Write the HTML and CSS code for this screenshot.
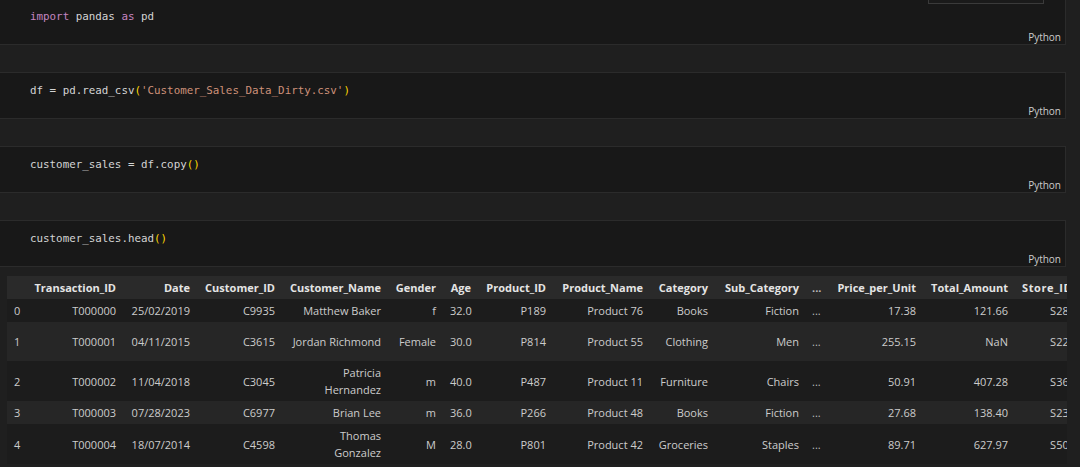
FILE: index.html
```html
<!DOCTYPE html>
<html>
<head>
<meta charset="utf-8">
<link rel="stylesheet" href="styles.css">
</head>
<body>
<div class="cell-toolbar"></div>
<div class="notebook">
  <div class="cell">
    <div class="editor">
      <div class="code"><span class="kw">import</span> pandas <span class="kw">as</span> pd</div>
      <div class="lang">Python</div>
    </div>
  </div>
  <div class="cell">
    <div class="editor">
      <div class="code">df = pd.read_csv<span class="br">(</span><span class="str">'Customer_Sales_Data_Dirty.csv'</span><span class="br">)</span></div>
      <div class="lang">Python</div>
    </div>
  </div>
  <div class="cell">
    <div class="editor">
      <div class="code">customer_sales = df.copy<span class="br">()</span></div>
      <div class="lang">Python</div>
    </div>
  </div>
  <div class="cell">
    <div class="editor">
      <div class="code">customer_sales.head<span class="br">()</span></div>
      <div class="lang">Python</div>
    </div>
  </div>
  <div class="output">
    <table class="df">
      <colgroup>
        <col class="w20"><col class="w96"><col class="w74"><col class="w85"><col class="w106"><col class="w55"><col class="w35"><col class="w75"><col class="w97"><col class="w65"><col class="w91"><col class="w23"><col class="w94"><col class="w92"><col class="w67">
      </colgroup>
      <thead>
        <tr class="h23">
          <th class="idx"></th><th>Transaction_ID</th><th>Date</th><th>Customer_ID</th><th>Customer_Name</th><th>Gender</th><th>Age</th><th>Product_ID</th><th>Product_Name</th><th>Category</th><th>Sub_Category</th><th class="dots">...</th><th>Price_per_Unit</th><th>Total_Amount</th><th class="left">Store_ID</th>
        </tr>
      </thead>
      <tbody>
        <tr class="h23">
          <td class="idx">0</td><td>T000000</td><td>25/02/2019</td><td>C9935</td><td>Matthew Baker</td><td>f</td><td>32.0</td><td>P189</td><td>Product 76</td><td>Books</td><td>Fiction</td><td class="dots">...</td><td>17.38</td><td>121.66</td><td>S281</td>
        </tr>
        <tr class="alt h39">
          <td class="idx">1</td><td>T000001</td><td>04/11/2015</td><td>C3615</td><td>Jordan Richmond</td><td>Female</td><td>30.0</td><td>P814</td><td>Product 55</td><td>Clothing</td><td>Men</td><td class="dots">...</td><td>255.15</td><td>NaN</td><td>S223</td>
        </tr>
        <tr class="h40">
          <td class="idx">2</td><td>T000002</td><td>11/04/2018</td><td>C3045</td><td>Patricia<br>Hernandez</td><td>m</td><td>40.0</td><td>P487</td><td>Product 11</td><td>Furniture</td><td>Chairs</td><td class="dots">...</td><td>50.91</td><td>407.28</td><td>S364</td>
        </tr>
        <tr class="alt h23">
          <td class="idx">3</td><td>T000003</td><td>07/28/2023</td><td>C6977</td><td>Brian Lee</td><td>m</td><td>36.0</td><td>P266</td><td>Product 48</td><td>Books</td><td>Fiction</td><td class="dots">...</td><td>27.68</td><td>138.40</td><td>S233</td>
        </tr>
        <tr class="h40">
          <td class="idx">4</td><td>T000004</td><td>18/07/2014</td><td>C4598</td><td>Thomas<br>Gonzalez</td><td>M</td><td>28.0</td><td>P801</td><td>Product 42</td><td>Groceries</td><td>Staples</td><td class="dots">...</td><td>89.71</td><td>627.97</td><td>S501</td>
        </tr>
      </tbody>
    </table>
  </div>
</div>
</body>
</html>
```

FILE: styles.css
```css
html, body {
  margin: 0;
  padding: 0;
  background: #1f1f1f;
  overflow: hidden;
  width: 1080px;
  height: 467px;
}

.notebook {
  display: flex;
  flex-direction: column;
  margin-top: -2px;
}

.cell-toolbar {
  position: absolute;
  left: 928px;
  top: -20px;
  width: 114px;
  height: 22px;
  border: 1px solid #3a3a3a;
  background: #1a1a1a;
}

.cell {
  margin-bottom: 27px;
}

.editor {
  box-sizing: border-box;
  height: 47px;
  width: 1067px;
  margin-left: -1px;
  border: 1px solid #2b2b2b;
  background: #181818;
  display: flex;
  flex-direction: column;
}

.code {
  font-family: "DejaVu Sans Mono", "Liberation Mono", monospace;
  font-size: 10.85px;
  line-height: 17px;
  color: #d4d4d4;
  padding: 9px 0 0 30px;
  white-space: pre;
}

.kw { color: #c586c0; }
.str { color: #ce9178; }
.br { color: #ffd700; }

.lang {
  margin-top: auto;
  align-self: flex-end;
  font-family: "Open Sans", "Noto Sans", sans-serif;
  font-size: 10px;
  line-height: 14px;
  color: #cccccc;
  padding-right: 4px;
}

.output {
  margin-top: -18px;
  margin-left: 7px;
  width: 1060px;
  overflow: hidden;
}

.df {
  table-layout: fixed;
  border-collapse: collapse;
  width: 1075px;
  font-family: "Open Sans", "Noto Sans", sans-serif;
  font-size: 11px;
  color: #cccccc;
}

.w20 { width: 20px; }
.w96 { width: 96px; }
.w74 { width: 74px; }
.w85 { width: 85px; }
.w106 { width: 106px; }
.w55 { width: 55px; }
.w35 { width: 35px; }
.w75 { width: 75px; }
.w97 { width: 97px; }
.w65 { width: 65px; }
.w91 { width: 91px; }
.w23 { width: 23px; }
.w94 { width: 94px; }
.w92 { width: 92px; }
.w67 { width: 67px; }

.df th, .df td {
  padding: 0 7px;
  line-height: 17px;
  text-align: right;
  vertical-align: middle;
  white-space: nowrap;
  overflow: hidden;
}

.df th {
  font-weight: 700;
  color: #e4e4e4;
}

.df thead tr {
  background: #2a2a2a;
}

.df tbody tr {
  background: #1c1c1c;
}

.df tbody tr.alt {
  background: #262626;
}

.h23 { height: 23px; }
.h39 { height: 39px; }
.h40 { height: 40px; }

.df .idx {
  text-align: left;
}

.df .left {
  text-align: left;
  letter-spacing: 0.6px;
}

.df .dots {
  text-align: left;
  padding: 0 0 0 6px;
  font-size: 11px;
  color: #bdbdbd;
}
```
